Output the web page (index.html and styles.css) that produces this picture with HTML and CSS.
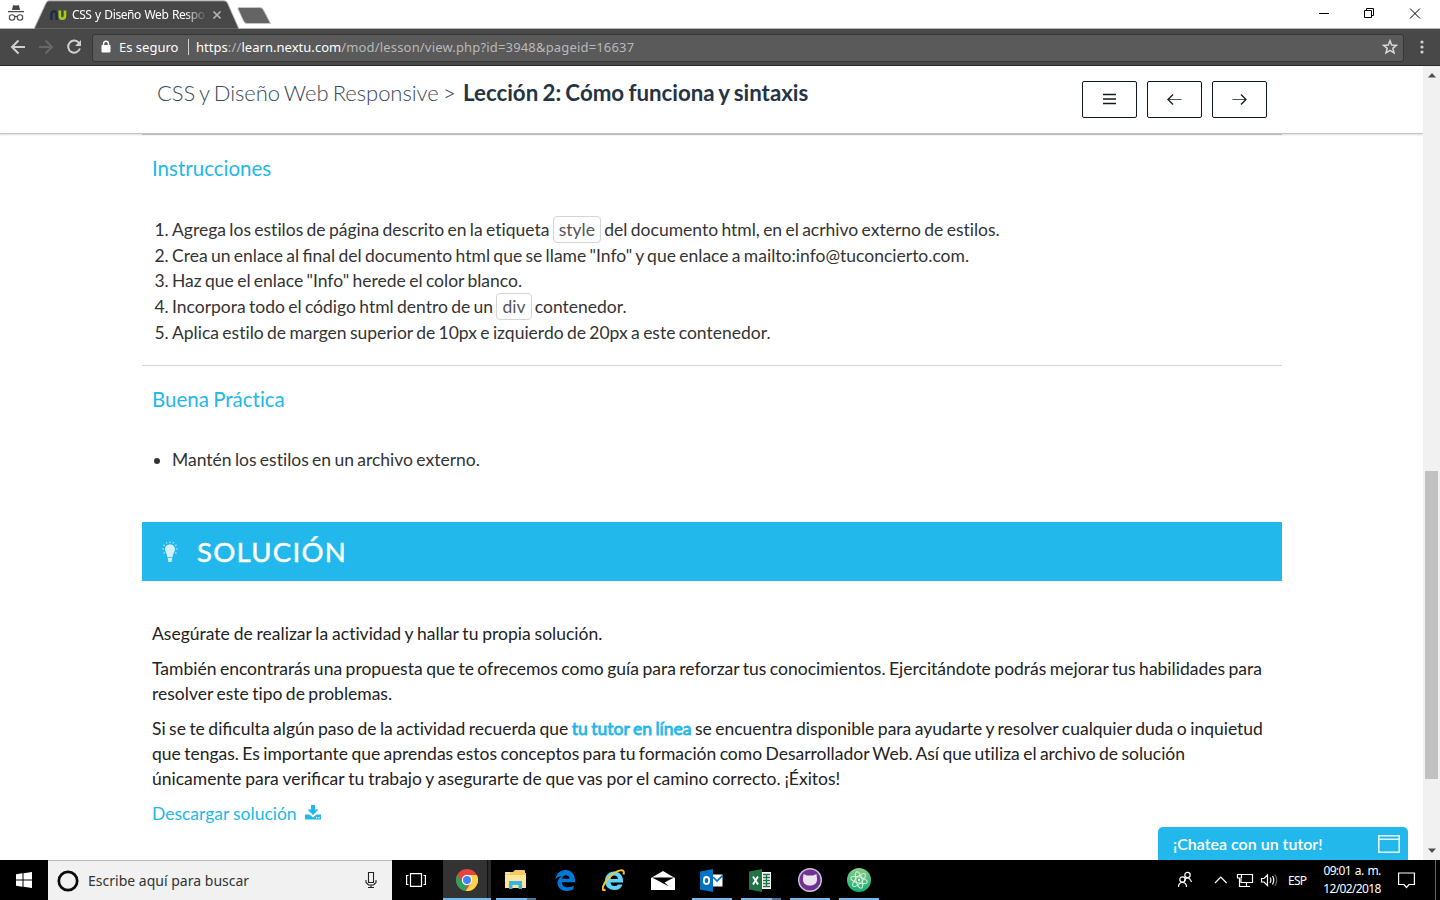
FILE: index.html
```html
<!DOCTYPE html>
<html lang="es">
<head>
<meta charset="utf-8">
<title>CSS y Diseño Web Responsive</title>
<link rel="stylesheet" href="styles.css">
</head>
<body>
<div class="screen">
  <div class="tabstrip">
    <svg class="tabs-art" width="290" height="29" viewBox="0 0 290 29">
      <path d="M0 28.5H290" stroke="#b5bab7"/>
      <path d="M34 29L46 3Q47 .8 49 .8H224Q226.500 .8 227.500 3L239 29Z" fill="#484848" stroke="#b5bab7"/>
      <path d="M35 28.500H238V30H35Z" fill="#484848"/>
      <path d="M239 7.500H260Q262.500 7.500 263.500 10L270.500 23.500H247Q244.500 23.500 243.500 21L238 9Q237.500 7.500 239 7.500Z" fill="#646464" stroke="#c4c4c4"/>
      <path d="M12 10L13 5.200H15L16 5.700L17 5.200H19L20 10ZM8 11H24V12.200H8Z" fill="#484848"/>
      <g fill="none" stroke="#484848" stroke-width="1.100"><circle cx="12" cy="17.500" r="2.700"/><circle cx="20" cy="17.500" r="2.700"/><path d="M14.500 17Q16 15.800 17.500 17"/></g>
      <path d="M51.300 20V15Q51.300 11.300 54 11.300T56.500 15V20" fill="none" stroke="#1d2b45" stroke-width="2.300"/>
      <path d="M59.800 10.500V15.500Q59.800 18.700 62.400 18.700T65 15.500V10.500" fill="none" stroke="#a4cf10" stroke-width="2.600"/>
      <path d="M213.500 11.500L220.500 18.500M220.500 11.500L213.500 18.500" stroke="#b4b4b4" stroke-width="1.700"/>
    </svg>
    <span class="tab-title">CSS y Diseño Web Respo</span>
    <svg class="window-buttons" width="110" height="28" viewBox="0 0 110 28" fill="none" stroke="#000" stroke-width="1">
      <path d="M9 13.500H19M54.500 10.500H61.500V17.500H54.500ZM56.500 10V8.500H63.500V15.500H62M100 8.500L110 18.500M110 8.500L100 18.500"/>
    </svg>
  </div>
  <div class="toolbar">
    <svg width="92" height="37" viewBox="0 0 92 37" fill="none" stroke="#d0d0d0" stroke-width="2">
      <path d="M25 18H12.500M18.500 11.500L12 18L18.500 24.500"/>
      <path d="M39 18H51.500M45.500 11.500L52 18L45.500 24.500" stroke="#686868"/>
      <path d="M79 14A6 6 0 1 0 79.900 19.500"/><path d="M81 11V17H75Z" fill="#d0d0d0" stroke="none"/>
    </svg>
    <div class="omnibox">
      <svg class="lock" width="10" height="14" viewBox="0 0 10 14"><path d="M1 5H9Q9.500 5 9.500 6V11.500Q9.500 12.500 8.500 12.500H1.500Q.5 12.500 .5 11.500V6Q.5 5 1 5Z" fill="#fff"/><path d="M2.500 5.500V4Q2.500 1.300 5 1.300T7.500 4V5.500" fill="none" stroke="#fff" stroke-width="1.400"/></svg>
      <span class="secure">Es seguro</span><span class="divider"></span>
      <span class="url"><b>https</b>://<b>learn.nextu.com</b>/mod/lesson/view.php?id=3948&amp;pageid=16637</span>
      <svg class="star" width="16" height="16" viewBox="0 0 16 16"><path d="M8 1.800L9.700 6.100L14.300 6.400L10.800 9.300L12 13.800L8 11.300L4 13.800L5.200 9.300L1.700 6.400L6.300 6.100Z" fill="none" stroke="#d8d8d8" stroke-width="1.500"/></svg>
    </div>
    <svg class="dots" width="4" height="14" viewBox="0 0 4 14" fill="#d0d0d0"><circle cx="2" cy="2" r="1.600"/><circle cx="2" cy="7" r="1.600"/><circle cx="2" cy="12" r="1.600"/></svg>
  </div>
  <div class="viewport">
    <div class="page">
      <header class="lesson-head">
        <div class="crumbs"><span class="course">CSS y Diseño Web Responsive &gt;</span><span class="lesson">Lección 2: Cómo funciona y sintaxis</span></div>
        <nav class="nav-buttons">
          <span class="nav-btn"><svg width="13" height="12" viewBox="0 0 13 12" stroke="#111820" stroke-width="1.500"><path d="M0 1.500H13M0 6H13M0 10.500H13"/></svg></span>
          <span class="nav-btn"><svg width="15" height="11" viewBox="0 0 15 11" fill="none" stroke="#111820"><path d="M1 5.500H14.500" stroke="#555"/><path d="M6 .5L1 5.500L6 10.500" stroke-width="1.300"/></svg></span>
          <span class="nav-btn"><svg width="15" height="11" viewBox="0 0 15 11" fill="none" stroke="#111820"><path d="M.5 5.500H14" stroke="#555"/><path d="M9 .5L14 5.500L9 10.500" stroke-width="1.300"/></svg></span>
        </nav>
      </header>
      <main class="content">
        <section class="instructions">
          <h2>Instrucciones</h2>
          <ol>
            <li>Agrega los estilos de página descrito en la etiqueta <code>style</code> del documento html, en el acrhivo externo de estilos.</li>
            <li>Crea un enlace al <span class="lig">final</span> del documento html que se llame "Info" y que enlace a mailto:info@tuconcierto.com.</li>
            <li>Haz que el enlace "Info" herede el color blanco.</li>
            <li>Incorpora todo el código html dentro de un <code>div</code> contenedor.</li>
            <li>Aplica estilo de margen superior de 10px e izquierdo de 20px a este contenedor.</li>
          </ol>
        </section>
        <section class="practice">
          <h2>Buena Práctica</h2>
          <ul><li>Mantén los estilos en un archivo externo.</li></ul>
        </section>
        <div class="banner">
          <svg width="16" height="22" viewBox="0 0 16 22"><path d="M8 3.500C4.800 3.500 3 5.700 3 8.300C3 11 5.200 12.500 5.400 16H10.600C10.800 12.500 13 11 13 8.300C13 5.700 11.200 3.500 8 3.500ZM5.600 16.800H10.400L9.500 21H6.500Z" fill="#d5f0fb"/><path d="M8 .5V2M4.300 1.200L5 2.500M11.700 1.200L11 2.500M1.500 3.700L2.800 4.700M14.500 3.700L13.200 4.700M.3 8H1.800M14.200 8H15.700M1.500 12.500L2.800 11.500M14.500 12.500L13.200 11.500" stroke="#a4dff6" stroke-width="1.300"/></svg>
          <span>SOLUCIÓN</span>
        </div>
        <div class="solution">
          <p class="lead">Asegúrate de realizar la actividad y hallar tu propia solución.</p>
          <p>También encontrarás una propuesta que te ofrecemos como guía para reforzar tus conocimientos. Ejercitándote podrás mejorar tus habilidades para<br>resolver este tipo de problemas.</p>
          <p>Si se te <span class="lig">dificulta</span> algún paso de la actividad recuerda que <strong>tu tutor en línea</strong> se encuentra disponible para ayudarte y resolver cualquier duda o inquietud<br><span class="tight">que tengas. Es importante que aprendas estos conceptos para tu formación como Desarrollador Web. Así que utiliza el archivo de solución</span><br><span class="loose">únicamente para <span class="lig">verificar</span> tu trabajo y asegurarte de que vas por el camino correcto. ¡Éxitos!</span></p>
          <p class="download">Descargar solución <svg width="16" height="15" viewBox="0 0 16 15" fill="#22b8eb"><path d="M6 0H10V4.500H13.500L8 10L2.500 4.500H6ZM0 9.500H4.500L8 12.500L11.500 9.500H16V14.500H0Z"/><path d="M11 12H12.300V13.200H11ZM13.300 12H14.600V13.200H13.300Z" fill="#fff"/></svg></p>
        </div>
      </main>
      <div class="chat"><span>¡Chatea con un tutor!</span><svg width="22" height="18" viewBox="0 0 22 18" fill="none" stroke="#e6f7fd" stroke-width="1.600"><path d="M.8 .8H21.200V17.200H.8ZM.8 4.200H21.200"/></svg></div>
    </div>
    <div class="scrollbar">
      <svg width="8" height="5" viewBox="0 0 8 5"><path d="M0 4.500L4 0L8 4.500Z" fill="#505050"/></svg>
      <div class="thumb"></div>
      <svg width="8" height="5" viewBox="0 0 8 5"><path d="M0 .5H8L4 5Z" fill="#505050"/></svg>
    </div>
  </div>
  <footer class="taskbar">
    <div class="start"><svg width="16" height="16" viewBox="0 0 16 16" fill="#fff"><path d="M0 2.300L6.500 1.300V7.500H0ZM7.500 1.200L16 0V7.500H7.500ZM0 8.500H6.500V14.700L0 13.700ZM7.500 8.500H16V16L7.500 14.800Z"/></svg></div>
    <div class="search">
      <svg width="22" height="22" viewBox="0 0 22 22"><circle cx="11" cy="11" r="9.200" fill="none" stroke="#0a0a0a" stroke-width="2.700"/></svg>
      <span>Escribe aquí para buscar</span>
      <svg class="mic" width="12" height="18" viewBox="0 0 12 18" fill="none" stroke="#222" stroke-width="1.100"><path d="M3.500 1.500H8.500V11.500H3.500ZM1 9V11.500L3.500 14H8.500L11 11.500V9M6 14V16.500M3 16.500H9"/></svg>
    </div>
    <div class="app view"><svg width="20" height="14" viewBox="0 0 20 14" fill="none" stroke="#fff" stroke-width="1.200"><path d="M4.500 .6H15.500V13.400H4.500ZM2.500 2.500H.6V11.500H2.500M17.500 2.500H19.400V11.500H17.500"/></svg></div>
    <div class="app active"><svg width="22" height="22" viewBox="0 0 22 22"><circle cx="11" cy="11" r="11" fill="#e7453b"/><path d="M1.500 5.500L6.200 13.700Q8 16 11 16L9.500 21.900A11 11 0 0 1 1.500 5.500Z" fill="#27a55b"/><path d="M11 6H20.800A11 11 0 0 1 9.500 21.900L15.300 13.500Q16.700 9 11 6Z" fill="#ffd24a"/><circle cx="11" cy="11" r="5.200" fill="#fff"/><circle cx="11" cy="11" r="4" fill="#4285f4"/></svg></div>
    <div class="app running stacked"><svg width="23" height="20" viewBox="0 0 23 20"><path d="M1 2H9L11 0H20Q21 0 21 1V3H22V18H1Z" fill="#f4cb63"/><path d="M1 5H22V18H1Z" fill="#fde69c"/><path d="M2 3H6" stroke="#fff"/><path d="M5 11H18V19H14.500V15H8.500V19H5Z" fill="#38b3e5"/></svg></div>
    <div class="app"><svg width="20" height="21" viewBox="0 0 20 21"><path d="M.3 9.500C1.200 3.500 5 0 10.500 0C16.500 0 20 4.500 20 10V12.300H6.800C7 16 9.500 17.300 13 17.300Q16 17.300 18.500 15.700V19.300Q15.500 21 11.500 21C5.600 21 2.500 17 2.500 13C2.500 9.600 4.600 7.200 7.600 6C3.800 6.300 1.600 7.400 .3 9.500ZM7 8.800H14.500Q14.400 5.300 11 5.300Q7.700 5.300 7 8.800Z" fill="#0078d7"/></svg></div>
    <div class="app"><svg width="23" height="23" viewBox="0 0 23 23"><path fill-rule="evenodd" d="M12 2.500C17.500 2.500 21 6.500 21 11.500V13.500H8.500Q9 17 12.500 17Q15 17 16 15.500H20.500Q18.500 21 12.500 21C6.500 21 3 17 3 11.700C3 6.500 7 2.500 12 2.500ZM8.500 10H16Q15.500 6.500 12.300 6.500T8.500 10Z" fill="#5fd3fa"/><path d="M3.500 20.500C-2 23.500 1 14 8.500 7C15 1 23.500-1.500 21.500 5.500" fill="none" stroke="#f9c629" stroke-width="2"/></svg></div>
    <div class="app"><svg width="24" height="19" viewBox="0 0 24 19"><path d="M0 7L12 0L24 7V19H0Z" fill="#fff"/><path d="M1 6.500H23L13.500 11.500L18 15.500Z" fill="#000"/></svg></div>
    <div class="app running"><svg width="23" height="23" viewBox="0 0 23 23"><path d="M0 2.500L13 0V23L0 20.500Z" fill="#0072c6"/><path d="M13 5.500H22.500V17.500H13Z" fill="#fff"/><path d="M13 8L17 12L22.500 6.500" fill="none" stroke="#0072c6" stroke-width="1.700"/><ellipse cx="6.500" cy="11.500" rx="2.700" ry="3.500" fill="none" stroke="#fff" stroke-width="1.800"/></svg></div>
    <div class="app running stacked"><svg width="23" height="23" viewBox="0 0 23 23"><path d="M13 3H22V20H13Z" fill="#fff"/><path d="M14 5.500H21M14 8.500H21M14 11.500H21M14 14.500H21M14 17.500H21M17.500 5V18" stroke="#217346" stroke-width="1.300"/><path d="M0 2.500L13 0V23L0 20.500Z" fill="#217346"/><path d="M4 7.500L9 15.500M9 7.500L4 15.500" stroke="#fff" stroke-width="1.900"/></svg></div>
    <div class="app running"><svg width="24" height="24" viewBox="0 0 24 24"><circle cx="12" cy="12" r="11.300" fill="#713095" stroke="#d0c2da" stroke-width="1.400"/><path d="M5.500 6L9 7.500H15L18.500 6L19 10.500C19.500 15 16.500 17.500 12 17.500S4.500 15 5 10.500Z" fill="#ebe3ef"/></svg></div>
    <div class="app running"><svg width="24" height="24" viewBox="0 0 24 24"><defs><linearGradient id="atom" x2="0" y2="1"><stop stop-color="#8acb84"/><stop offset="1" stop-color="#13ac78"/></linearGradient></defs><circle cx="12" cy="12" r="12" fill="url(#atom)"/><g fill="none" stroke="#d9f4df" stroke-width="1"><ellipse cx="12" cy="12" rx="8.500" ry="3.200" transform="rotate(15 12 12)"/><ellipse cx="12" cy="12" rx="8.500" ry="3.200" transform="rotate(75 12 12)"/><ellipse cx="12" cy="12" rx="8.500" ry="3.200" transform="rotate(135 12 12)"/></g><circle cx="12" cy="12" r="1.200" fill="#fff"/></svg></div>
    <div class="tray">
      <svg width="104" height="20" viewBox="0 0 104 20" fill="none" stroke="#fff" stroke-width="1.200">
        <circle cx="11.500" cy="5" r="2.700"/><path d="M8.500 11Q9 8 11.500 8T15.500 12"/><circle cx="6.500" cy="9.500" r="2.700"/><path d="M2.500 17Q2.500 12.500 6.500 12.500T10.500 17"/>
        <path d="M39 13L44.800 7L50.600 13"/>
        <path d="M66 4.500H76.500V12.500H65V9M61.500 4.500H65.500V8H61.500ZM63.500 8V16.500H74M70.500 13V16.500"/>
        <path d="M85.500 8.500H88L91.500 5V15.500L88 12H85.500ZM94 7.500Q95.800 10 94 13M96.500 6Q99 10 96.500 14.500"/><path d="M99 4.500Q102.500 10 99 16" stroke="#666"/>
      </svg>
      <span class="lang">ESP</span>
      <div class="clock"><span class="time">09:01 a. m.</span><span>12/02/2018</span></div>
      <svg class="notice" width="17" height="17" viewBox="0 0 17 17" fill="none" stroke="#fff" stroke-width="1.200"><path d="M.6 1H16.400V12.500H11L8.500 15.500L6 12.500H.6Z"/></svg>
      <span class="peek"></span>
    </div>
  </footer>
</div>
</body>
</html>
```
FILE: styles.css
```css
* { box-sizing: border-box; }
body { margin: 0; font-family: Lato, sans-serif; background: #fff; }
svg { display: block; flex: none; }
.screen { width: 1440px; height: 900px; display: flex; flex-direction: column; overflow: hidden; }
.tabstrip, .toolbar, .search, .clock, .lang { font-family: "Noto Sans", sans-serif; }
.tabstrip { height: 29px; position: relative; display: flex; justify-content: space-between; border-bottom: 1px solid #b5bab7; flex: none; }
.tab-title { position: absolute; left: 72px; top: 6px; white-space: nowrap; font-size: 12px; line-height: 17px; letter-spacing: -.4px; word-spacing: .8px; color: #fff; -webkit-mask-image: linear-gradient(90deg, #000 112px, transparent 136px); mask-image: linear-gradient(90deg, #000 112px, transparent 136px); }
.window-buttons { margin-right: 20px; overflow: visible; }
.toolbar { height: 37px; flex: none; display: flex; align-items: center; background: #484848; border-bottom: 1px solid #292929; }
.omnibox { width: 1312px; height: 28px; margin-top: 1px; display: flex; align-items: center; padding: 0 6px 2px 8px; background: #5a5a5a; border: 1px solid #363636; border-radius: 3px; color: #fff; font-size: 13px; white-space: nowrap; }
.secure { margin-left: 8px; width: 69px; }
.divider { width: 1px; height: 16px; background: #d0d0d0; margin-right: 7px; }
.url { color: #b9b9b9; letter-spacing: .17px; }
.url b { font-weight: 400; color: #fff; letter-spacing: .03px; }
.star { margin-left: auto; margin-right: -1px; }
.dots { margin-left: 16px; }
.viewport { flex: 1; min-height: 0; display: flex; }
.page { width: 1423px; position: relative; overflow: hidden; }
.scrollbar { width: 17px; background: #f1f1f1; display: flex; flex-direction: column; align-items: center; justify-content: space-between; padding: 7px 0; }
.thumb { width: 13px; height: 308px; background: #c1c1c1; margin-top: 323px; }
.lesson-head { height: 68px; padding: 15px 156px 0 157px; display: flex; justify-content: space-between; border-bottom: 1px solid #c4c4c4; box-shadow: 0 1px 2px #ddd; }
.crumbs { display: flex; height: 24px; line-height: 24px; font-size: 22px; color: #253445; white-space: nowrap; }
.course { width: 306px; font-weight: 300; color: #3a4858; word-spacing: -1.600px; letter-spacing: -.06px; }
.lesson { font-weight: 700; font-size: 22.300px; word-spacing: -1.200px; }
.nav-buttons { display: flex; gap: 10px; }
.nav-btn { width: 55px; height: 37px; border: 1px solid #111820; border-radius: 2px; display: flex; align-items: center; justify-content: center; }
.nav-btn:first-child { padding: 0 1px 2px 0; }
.content { width: 1140px; margin-left: 142px; font-size: 17.500px; line-height: 25px; color: #333; font-variant-ligatures: none; }
.instructions { height: 232px; padding: 20px 10px 0; border-top: 1px solid #bdbdbd; border-bottom: 1px solid #d5d5d5; }
.practice { height: 156px; padding: 20px 10px 0; }
h2 { margin: 0; height: 26px; line-height: 26px; font-size: 20.500px; font-weight: 400; color: #22b8eb; word-spacing: -1px; }
ol, ul { margin: 36px 0 0; padding-left: 20px; white-space: nowrap; word-spacing: -1.150px; }
ol li { height: 25.700px; line-height: 25.700px; }
ul { margin-top: 35px; }
code { font: inherit; display: inline-block; height: 27px; line-height: 26px; margin: -3px 0; padding: 0 5px; border: 1px solid #d5d5d5; border-radius: 4px; color: #555; vertical-align: baseline; }
.lig { font-variant-ligatures: common-ligatures; }
.banner { height: 59px; background: #22b8eb; color: #fff; display: flex; align-items: center; padding-left: 20px; gap: 19px; font-size: 27.500px; letter-spacing: 1.300px; -webkit-text-stroke: .5px #fff; }
.banner span { margin-top: -1px; }
.solution { padding: 40px 10px 0; color: #222; white-space: nowrap; word-spacing: -1px; }
.lead { word-spacing: -.600px; }
.tight { word-spacing: -1.100px; }
.loose { word-spacing: -.700px; }
p { margin: 0 0 10px; }
strong { color: #22b8eb; font-weight: 400; -webkit-text-stroke: .8px #22b8eb; }
.download { color: #22b8eb; display: flex; align-items: center; gap: 8px; word-spacing: -.500px; }
.download svg { margin-top: -2px; }
.chat { position: absolute; right: 15px; bottom: 0; width: 250px; height: 33px; padding: 0 8px 0 15px; border-radius: 5px 5px 0 0; background: #22b8eb; color: #fff; font-size: 16px; font-weight: 600; display: flex; align-items: center; justify-content: space-between; }
.chat span { margin-top: -1px; }
.taskbar { height: 40px; flex: none; background: #000; display: flex; }
.start { width: 48px; display: flex; align-items: center; justify-content: center; }
.search { width: 344px; background: #f1f1f1; border-top: 1px solid #b9b9b9; display: flex; align-items: center; padding: 0 15px 0 9px; font-size: 14px; color: #333; letter-spacing: .01px; }
.search span { margin-left: 9px; flex: 1; white-space: nowrap; }
.mic { margin-bottom: 2px; }
.app { width: 49px; height: 40px; display: flex; align-items: center; justify-content: center; }
.view { padding-right: 2px; width: 50px; }
.running { background: linear-gradient(#76b9ed, #76b9ed) 5px 38px / 40px 2px no-repeat; }
.active { width: 48px; background: linear-gradient(#76b9ed, #76b9ed) 0 38px / 48px 2px no-repeat, linear-gradient(90deg, #333 44px, #111 44px, #111 45px, #292929 45px); margin-left: 1px; }
.running.stacked { background: linear-gradient(90deg, #76b9ed 31px, #4a789b 31px) 5px 38px / 40px 2px no-repeat; }
.tray { margin-left: auto; display: flex; align-items: center; color: #fff; font-size: 12px; padding-right: 4px; }
.lang { width: 20px; margin-left: 8px; font-size: 12px; letter-spacing: -.7px; }
.clock { width: 68px; margin-left: 10px; display: flex; flex-direction: column; align-items: center; line-height: 18px; font-size: 12px; letter-spacing: -.65px; white-space: nowrap; }
.time { word-spacing: 1.500px; }
.notice { margin-left: 12px; }
.peek { width: 1px; height: 40px; margin-left: 20px; background: #666; }
```
